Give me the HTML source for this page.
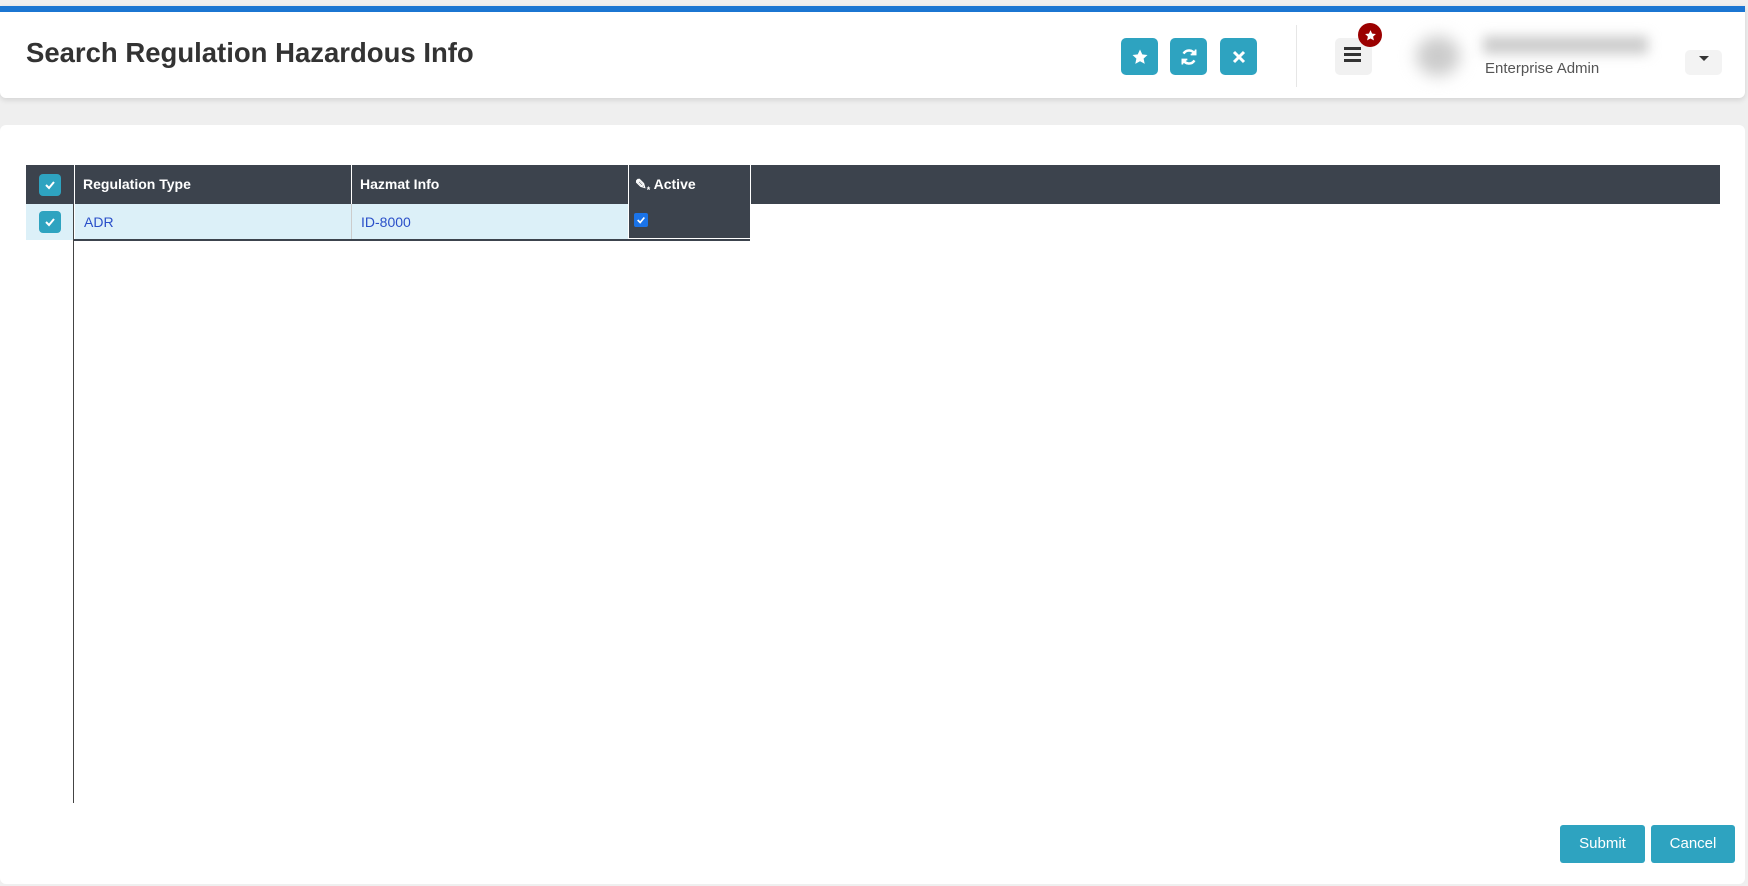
<!DOCTYPE html>
<html><head><meta charset="utf-8"><style>
*{box-sizing:border-box;margin:0;padding:0}
body{width:1748px;height:886px;background:#efefef;font-family:"Liberation Sans",sans-serif;position:relative;overflow:hidden}
.abs{position:absolute}
.hdr{left:0;top:6px;width:1745px;height:92px;background:#fff;border-top:6px solid #1b76d2;border-radius:0 0 6px 6px;box-shadow:0 2px 6px rgba(0,0,0,.12)}
.title{left:26px;top:37px;font-size:27.5px;font-weight:bold;color:#333}
.btn{width:37px;height:37px;background:#2ea3c0;border-radius:5px;top:38px;display:flex;align-items:center;justify-content:center}
.card{left:0;top:125px;width:1745px;height:759px;background:#fff;border-radius:6px}
.th{top:165px;height:39px;background:#3c434d;color:#fff;font-weight:bold;font-size:14px;line-height:39px;padding-left:8px}
.cb{width:22px;height:22px;background:#2ea3c0;border-radius:4px;display:flex;align-items:center;justify-content:center}
.td{top:204px;height:36px;background:#dcf0f8;color:#2a4fc9;font-size:14px;line-height:36px;padding-left:9px}
.fb{height:38px;top:825px;background:#2ea3c0;color:#fff;font-size:15px;line-height:38px;text-align:center;border-radius:3px}
</style></head><body>
<div class="abs hdr"></div>
<div class="abs title">Search Regulation Hazardous Info</div>
<div class="abs btn" style="left:1121px"><svg width="18" height="18" viewBox="0 0 24 24"><path fill="#fff" d="M12 2l3 6.5 7 .8-5.2 4.8 1.5 7L12 17.6 5.7 21.1l1.5-7L2 9.3l7-.8z"/></svg></div>
<div class="abs btn" style="left:1170px"><svg width="20" height="20" viewBox="0 0 24 24" fill="none" stroke="#fff" stroke-width="3"><path d="M19 9a7.5 7.5 0 0 0-13.5-1M5 15a7.5 7.5 0 0 0 13.5 1"/><path d="M20 3v6h-6M4 21v-6h6" fill="#fff" stroke-width="2"/></svg></div>
<div class="abs btn" style="left:1220px"><svg width="14" height="14" viewBox="0 0 14 14" stroke="#fff" stroke-width="3"><path d="M2 2l10 10M12 2L2 12"/></svg></div>
<div class="abs" style="left:1296px;top:25px;width:1px;height:62px;background:#e6e6e6"></div>
<div class="abs" style="left:1335px;top:38px;width:37px;height:37px;background:#f1f1f1;border-radius:5px"></div>
<div class="abs" style="left:1344px;top:47px;width:17px;height:3px;background:#333;box-shadow:0 6px 0 #333,0 12px 0 #333"></div>
<div class="abs" style="left:1358px;top:23px;width:24px;height:24px;background:#9b0000;border-radius:50%;display:flex;align-items:center;justify-content:center"><svg width="13" height="13" viewBox="0 0 24 24"><path fill="#fff" d="M12 2l3 6.5 7 .8-5.2 4.8 1.5 7L12 17.6 5.7 21.1l1.5-7L2 9.3l7-.8z"/></svg></div>
<div class="abs" style="left:1416px;top:36px;width:44px;height:40px;border-radius:50%;background:#ccc;filter:blur(8px)"></div>
<div class="abs" style="left:1483px;top:36px;width:165px;height:18px;background:#ccc;filter:blur(6px)"></div>
<div class="abs" style="left:1485px;top:60px;font-size:15px;color:#555">Enterprise Admin</div>
<div class="abs" style="left:1685px;top:50px;width:37px;height:25px;background:#f3f3f3;border-radius:5px"></div>
<div class="abs" style="left:1699px;top:56px;border:5px solid transparent;border-top:5px solid #333"></div>
<div class="abs card"></div>
<div class="abs th" style="left:26px;width:1694px"></div>
<div class="abs" style="left:74px;top:165px;width:1px;height:39px;background:#fff"></div>
<div class="abs th" style="left:75px;width:276px">Regulation Type</div>
<div class="abs" style="left:351px;top:165px;width:1px;height:39px;background:#fff"></div>
<div class="abs th" style="left:352px;width:276px">Hazmat Info</div>
<div class="abs" style="left:628px;top:165px;width:1px;height:39px;background:#fff"></div>
<div class="abs th" style="left:629px;width:121px;padding-left:6px"><span style="font-size:14px">✎<sub style="font-size:9px">*</sub></span> Active</div>
<div class="abs" style="left:750px;top:165px;width:1px;height:39px;background:#fff"></div>
<div class="abs cb" style="left:39px;top:174px"><svg width="12" height="12" viewBox="0 0 12 12" fill="none" stroke="#fff" stroke-width="2"><path d="M2 6l3 3 5-6"/></svg></div>
<div class="abs" style="left:26px;top:204px;width:48px;height:36px;background:#dcf0f8"></div>
<div class="abs cb" style="left:39px;top:211px"><svg width="12" height="12" viewBox="0 0 12 12" fill="none" stroke="#fff" stroke-width="2"><path d="M2 6l3 3 5-6"/></svg></div>
<div class="abs td" style="left:75px;width:276px">ADR</div>
<div class="abs" style="left:351px;top:204px;width:1px;height:36px;background:#ccc"></div>
<div class="abs td" style="left:352px;width:276px">ID-8000</div>
<div class="abs" style="left:629px;top:204px;width:121px;height:34px;background:#3c434d"></div>
<div class="abs" style="left:634px;top:213px;width:14px;height:14px;background:#1a73e8;border-radius:2px;display:flex;align-items:center;justify-content:center"><svg width="10" height="10" viewBox="0 0 12 12" fill="none" stroke="#fff" stroke-width="2"><path d="M2 6l3 3 5-6"/></svg></div>
<div class="abs" style="left:74px;top:239px;width:676px;height:2px;background:#3c434d"></div>
<div class="abs" style="left:73px;top:204px;width:1px;height:599px;background:#444"></div>
<div class="abs fb" style="left:1560px;width:85px">Submit</div>
<div class="abs fb" style="left:1651px;width:84px">Cancel</div>
</body></html>
